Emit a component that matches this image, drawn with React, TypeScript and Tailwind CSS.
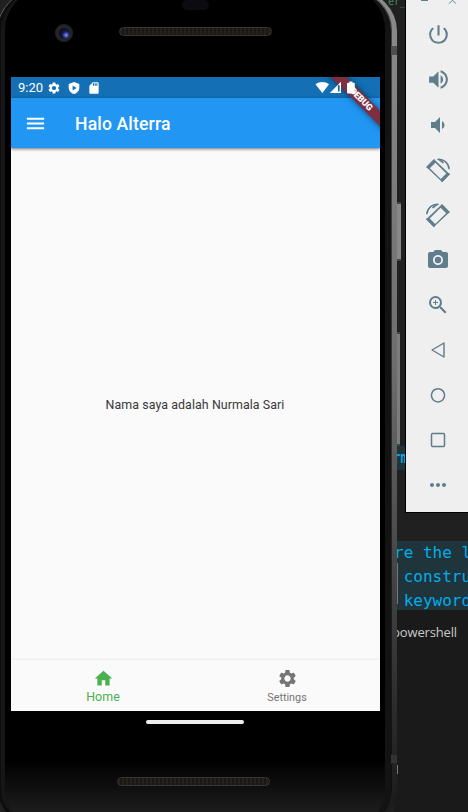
import type { ReactNode } from 'react';
import {
  MdCameraAlt,
  MdHome,
  MdMenu,
  MdMoreHoriz,
  MdPowerSettingsNew,
  MdSdCard,
  MdSettings,
  MdVolumeDown,
  MdVolumeUp,
  MdZoomIn,
} from 'react-icons/md';

function Rotate({ flip = false }: { flip?: boolean }) {
  return (
    <svg viewBox="0 0 24 24" className={flip ? 'h-6 w-6 -scale-x-100' : 'h-6 w-6'} fill="currentColor">
      <path
        fillRule="evenodd"
        d="M7.300 2.300q.9-.8 1.800 0L22.800 15.200q.9.900 0 1.800l-5.900 5.900q-.9.900-1.800 0L1.300 10q-.9-.9 0-1.800ZM9.400 4.800 3.800 10.300l11 10.700 5.500-5.600Z"
      />
      <path d="M1.300 9.100 8.200 2.200M16 23l6.900-6.900" fill="none" stroke="currentColor" strokeWidth="2" strokeLinecap="round" />
      <path d="M11.500 1.400C17.500.6 22.600 5 23.200 11.300" fill="none" stroke="currentColor" strokeWidth="1.500" />
      <path d="M11 .9h3.500l3.600 3.500-1.200 1.200Z" />
    </svg>
  );
}

const tools: { name: string; icon: ReactNode }[] = [
  { name: 'Power', icon: <MdPowerSettingsNew size={25} /> },
  { name: 'Volume up', icon: <MdVolumeUp size={25} /> },
  { name: 'Volume down', icon: <MdVolumeDown size={24} /> },
  { name: 'Rotate left', icon: <Rotate /> },
  { name: 'Rotate right', icon: <Rotate flip /> },
  { name: 'Screenshot', icon: <MdCameraAlt size={24} /> },
  { name: 'Zoom', icon: <MdZoomIn size={24} /> },
  {
    name: 'Back',
    icon: (
      <svg width="16" height="18" viewBox="0 0 16 18" fill="none" stroke="currentColor" strokeWidth="1.400" strokeLinejoin="round">
        <path d="M14 2v14L2 9Z" />
      </svg>
    ),
  },
  {
    name: 'Home',
    icon: (
      <svg width="16" height="16" viewBox="0 0 16 16" fill="none" stroke="currentColor" strokeWidth="1.500">
        <circle cx="8" cy="8.300" r="6.600" />
      </svg>
    ),
  },
  {
    name: 'Overview',
    icon: (
      <svg width="16" height="16" viewBox="0 0 16 16" fill="none" stroke="currentColor" strokeWidth="1.500">
        <rect x="1.500" y="1.500" width="13" height="13" rx="1" />
      </svg>
    ),
  },
  { name: 'More', icon: <MdMoreHoriz size={24} /> },
];

function Editor() {
  return (
    <div className="flex h-full flex-col bg-[#202020] pl-[394px] font-['DejaVu_Sans_Mono','Liberation_Mono',monospace] text-base whitespace-pre text-[#00aeea]">
      <div className="-ml-[6px] h-[446px] text-[10px] leading-[3px] text-[#46885b]">er_</div>
      <div className="h-6 bg-[#1f343b] leading-6 font-bold">
        <span className="inline-block origin-left scale-x-[.65]">rn</span>
      </div>
      <div className="h-[71px]" />
      <div className="h-[69px] bg-[#1f343b]">
        <div className="h-6 leading-[23px]">re the l</div>
        <div className="h-6 leading-6"> constru</div>
        <div className="h-[21px] leading-6"> keyword</div>
      </div>
      <div className="flex-1 bg-[#1a1a1a] pt-3 font-['Open_Sans','Noto_Sans',sans-serif] text-[13px] leading-5 tracking-[-0.150px] text-[#c8c8c8]">
        <span className="-ml-0.5">powershell</span>
      </div>
    </div>
  );
}

function Speaker() {
  return (
    <div className="h-[9px] w-[153px] rounded-full border border-[#353533] bg-[repeating-linear-gradient(90deg,#25221d_0px,#25221d_2px,#191816_2px,#191816_4px)]" />
  );
}

function StatusBar() {
  return (
    <div className="flex h-[21px] items-center bg-[#146fb4] pl-[7px] text-white">
      <span className="w-[30px] text-[13px] leading-[21px]">9:20</span>
      <MdSettings size={14} className="-ml-px" />
      <svg className="ml-[7px] h-3 w-3" viewBox="0 0 12 12">
        <path d="M6 0 11.300 2v3.500C11.300 9 8.800 11.300 6 12 3.200 11.300 .7 9 .7 5.500V2Z" fill="white" />
        <path d="m4.600 3.500 4 2.500-4 2.500Z" fill="#146fb4" />
      </svg>
      <MdSdCard size={14} className="ml-[7px]" />
      <svg className="relative z-10 mr-[24px] ml-auto h-[13px] w-[42px]" viewBox="0 0 42 13" fill="white">
        <path d="M1.500 3.200C5.500 .1 11 .1 15 3.200L8.300 12Z" />
        <path fillRule="evenodd" d="M27 .8V12H15.800ZM25.600 4.200h-1.700v6.400h1.700Z" />
        <path d="M33 2.700q0-1 1-1h1.300V.5h3.200v1.200h1.300q1 0 1 1V11.500q0 1-1 1H34q-1 0-1-1Z" />
      </svg>
    </div>
  );
}

function Screen() {
  return (
    <div className="relative flex h-[634px] w-[369px] flex-col overflow-hidden bg-[#fafafa]">
      <StatusBar />
      <header className="flex h-[50px] shrink-0 items-center bg-[#2196f3] pl-[13px] text-white shadow-[0_1px_3px_#0008]">
        <MdMenu size={23} />
        <h1 className="mt-[2px] ml-[28px] text-[17.600px] leading-6 font-medium tracking-[0.150px]">Halo Alterra</h1>
      </header>
      <main className="flex flex-1 items-center justify-center pt-[2px] pr-px text-[12.400px] text-[#383838]">
        <span className="tracking-[0.080px]">Nama saya adalah Nurmala Sari</span>
      </main>
      <nav className="grid h-[51px] shrink-0 grid-cols-2 bg-[#fafafa] pr-px text-center shadow-[0_-1px_2px_#00000012]">
        <div className="flex flex-col items-center pt-2 text-[#4caf50]">
          <MdHome size={21} />
          <span className="text-[12.400px] leading-[15px] tracking-[0.100px]">Home</span>
        </div>
        <div className="flex flex-col items-center pt-2 text-[#757575]">
          <MdSettings size={21} />
          <span className="text-[10.800px] leading-[18px]">Settings</span>
        </div>
      </nav>
      <div className="absolute top-[17px] -right-[36px] flex h-[11px] w-[110px] rotate-45 items-center justify-center bg-[#7d2e43] text-[9px] font-black tracking-[-0.200px] text-white shadow-[0_0_6px_#0008]">
        DEBUG
      </div>
    </div>
  );
}

function Phone() {
  return (
    <div className="absolute -top-[9px] -left-[3px] h-[836px] w-[400px] rounded-[40px] bg-linear-to-b from-[#8c8c8c] via-[#6d6d6d] via-45% to-[#181818]">
      <div className="absolute inset-y-0 right-[5px] left-[1px] rounded-[39px] border-r border-l-[6px] border-r-[#00000066] border-l-[#0d0d0d] bg-[#00000030]" />
      <div className="absolute inset-y-px right-[6px] left-[4px] rounded-[38px] border-r-[6px] border-l-[4px] border-r-[#131313] border-l-[#161616] bg-[linear-gradient(180deg,#000_0%,#000_92%,#1b1b1b_98%)] pl-[6px]">
        <div className="flex h-[85px] flex-col">
          <div className="mt-[8px] ml-[171px] h-[10px] w-[27px] rounded-full bg-[#0b0b10]" />
          <div className="mt-[14px] flex items-start pl-[44px]">
            <div className="flex size-[18px] items-center justify-center rounded-full bg-[#242424]">
              <span className="size-[11px] rounded-full bg-[radial-gradient(circle_at_65%_65%,#98a6ff_0%,#4555bb_16%,#151b46_38%,#090a18_75%)]" />
            </div>
            <div className="mt-[3px] ml-[46px]"><Speaker /></div>
          </div>
        </div>
        <Screen />
        <div className="mt-[9px] ml-[135px] h-1 w-[98px] rounded-full bg-[#eee]" />
        <div className="mt-[53px] ml-[106px]"><Speaker /></div>
      </div>
      <span className="absolute top-[55px] right-0 h-[9px] w-[6px] bg-[#4e4e4e]" />
      <span className="absolute right-0 bottom-[63px] h-[10px] w-[6px] border-y border-[#252525] bg-[#333]" />
      <span className="absolute top-[211px] -right-1 h-[59px] w-1 border-y-2 border-[#444] bg-[#888]" />
      <span className="absolute top-[341px] -right-[3px] h-[114px] w-[3px] border-y-2 border-[#444] bg-[#7c7c7c]" />
      <span className="absolute top-[572px] -right-px h-[41px] w-px bg-[#777]" />
      <span className="absolute top-[774px] -right-px h-[9px] w-px bg-[#777]" />
    </div>
  );
}

function Toolbar() {
  return (
    <aside className="absolute top-0 left-[405px] h-[513px] w-[63px] border-b border-l border-black bg-[#efefef] text-[#607d8b]">
      <div className="flex h-[12px] justify-end pr-3">
        <svg width="38" height="5" viewBox="0 0 38 5" fill="none" stroke="currentColor">
          <path d="M3 .5h7M31 3.700l3.500-3.500 3.500 3.500" />
        </svg>
      </div>
      <div className="flex flex-col pl-[2px]">
        {tools.map((tool) => (
          <button key={tool.name} aria-label={tool.name} className="flex h-[45px] w-full items-center justify-center">
            {tool.icon}
          </button>
        ))}
      </div>
    </aside>
  );
}

export default function App() {
  return (
    <div className="relative h-[812px] w-[468px] overflow-hidden bg-[#202020] font-['Roboto',sans-serif]">
      <Editor />
      <Phone />
      <Toolbar />
    </div>
  );
}
